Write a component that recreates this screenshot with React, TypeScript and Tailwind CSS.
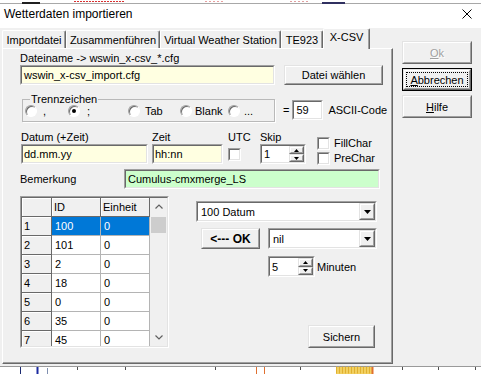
import React from "react";

const OUT_SUNK = "border border-t-[#a0a0a0] border-l-[#a0a0a0] border-r-white border-b-white";
const IN_SUNK = "border border-t-[#696969] border-l-[#696969] border-r-[#e3e3e3] border-b-[#e3e3e3]";
const OUT_RAISE = "border border-t-[#e3e3e3] border-l-[#e3e3e3] border-r-[#696969] border-b-[#696969]";
const IN_RAISE = "border border-t-white border-l-white border-r-[#a0a0a0] border-b-[#a0a0a0]";

type P = { className?: string; inner?: string; children?: React.ReactNode };

function Sunken({ className = "", inner = "bg-white", children }: P) {
  return (
    <div className={`${OUT_SUNK} ${className}`}>
      <div className={`${IN_SUNK} ${inner} w-full h-full flex items-center overflow-hidden`}>{children}</div>
    </div>
  );
}

function Raised({ className = "", inner = "", children }: P) {
  return (
    <div className={`${OUT_RAISE} bg-[#f0f0f0] ${className}`}>
      <div className={`${IN_RAISE} w-full h-full flex items-center justify-center ${inner}`}>{children}</div>
    </div>
  );
}

function TriDown({ w = 7, h = 4 }: { w?: number; h?: number }) {
  return (
    <svg width={w} height={h} viewBox={`0 0 ${w} ${h}`}>
      <polygon points={`0,0 ${w},0 ${w / 2},${h}`} fill="#000" />
    </svg>
  );
}
function TriUp({ w = 7, h = 4 }: { w?: number; h?: number }) {
  return (
    <svg width={w} height={h} viewBox={`0 0 ${w} ${h}`}>
      <polygon points={`0,${h} ${w},${h} ${w / 2},0`} fill="#000" />
    </svg>
  );
}

function Combo({ text, className = "" }: { text: string; className?: string }) {
  return (
    <Sunken className={`h-[21px] ${className}`}>
      <span className="flex-1 pl-[3px] leading-[14px]">{text}</span>
      <Raised className="w-[16px] h-full shrink-0">
        <TriDown />
      </Raised>
    </Sunken>
  );
}

function Spin({ text, className = "" }: { text: string; className?: string }) {
  return (
    <Sunken className={className}>
      <span className="flex-1 pl-[2px] leading-[14px]">{text}</span>
      <div className="w-[15px] h-full flex flex-col shrink-0">
        <Raised className="flex-1">
          <TriUp w={5} h={3} />
        </Raised>
        <Raised className="flex-1">
          <TriDown w={5} h={3} />
        </Raised>
      </div>
    </Sunken>
  );
}

function Check() {
  return <Sunken className="w-[13px] h-[13px] shrink-0" />;
}

function Radio({ checked = false }: { checked?: boolean }) {
  return (
    <span className="w-[12px] h-[12px] shrink-0 rounded-full border border-t-[#a0a0a0] border-l-[#a0a0a0] border-r-white border-b-white bg-white shadow-[inset_1px_1px_0_#696969] flex items-center justify-center">
      {checked && <span className="w-[4px] h-[4px] rounded-full bg-black" />}
    </span>
  );
}

function Chevron({ up }: { up?: boolean }) {
  return (
    <svg width="8" height="5" viewBox="0 0 8 5">
      <polyline
        points={up ? "0.5,4.5 4,1 7.5,4.5" : "0.5,0.5 4,4 7.5,0.5"}
        fill="none"
        stroke="#606060"
        strokeWidth="1.2"
      />
    </svg>
  );
}

const rows = [
  ["1", "100", "0"],
  ["2", "101", "0"],
  ["3", "2", "0"],
  ["4", "18", "0"],
  ["5", "0", "0"],
  ["6", "35", "0"],
  ["7", "45", "0"],
];

function Grid() {
  const fixed = "h-full bg-[#f0f0f0] border-r border-b border-[#696969] shadow-[inset_1px_1px_0_#fff] pl-[2px] leading-[18px] shrink-0";
  const cell = "h-full border-r border-b border-[#b4b4b4] pl-[3px] leading-[18px] shrink-0";
  return (
    <div className={`${OUT_SUNK} w-[149px] h-[152px] shrink-0`}>
      <div className={`${IN_SUNK} w-full h-full flex overflow-hidden bg-white`}>
        <div className="w-[128px] flex flex-col shrink-0">
          <div className="flex h-[19px] shrink-0">
            <div className={`${fixed} w-[30px]`} />
            <div className={`${fixed} w-[49px]`}>ID</div>
            <div className={`${fixed} w-[49px]`}>Einheit</div>
          </div>
          {rows.map((r, i) => (
            <div key={i} className="flex h-[19px] shrink-0">
              <div className={`${fixed} w-[30px]`}>{r[0]}</div>
              <div className={`${cell} w-[49px] ${i === 0 ? "bg-[#0078d7] text-white" : ""}`}>{r[1]}</div>
              <div className={`${cell} w-[49px] ${i === 0 ? "bg-[#0078d7] text-white" : ""}`}>{r[2]}</div>
            </div>
          ))}
        </div>
        <div className="w-[17px] h-full bg-[#f0f0f0] flex flex-col shrink-0">
          <div className="h-[17px] flex items-center justify-center shrink-0">
            <Chevron up />
          </div>
          <div className="mt-[2px] mx-[1px] h-[16px] bg-[#cdcdcd] shrink-0" />
          <div className="mt-auto h-[17px] flex items-center justify-center shrink-0">
            <Chevron />
          </div>
        </div>
      </div>
    </div>
  );
}

function Tab({ label, className = "", selected = false }: { label: string; className?: string; selected?: boolean }) {
  return (
    <div
      className={`${className} shrink-0 bg-[#f0f0f0] border-t border-l border-r border-t-white border-l-white border-r-[#696969] shadow-[inset_-1px_0_0_#a0a0a0] rounded-t-[2px] flex justify-center ${
        selected ? "h-[21px] -mb-px relative z-10 pt-[1px]" : "h-[18px] pt-[2px]"
      }`}
    >
      <span className="leading-[14px]">{label}</span>
    </div>
  );
}

export default function App() {
  return (
    <div className="w-[481px] h-[374px] overflow-hidden bg-[#f0f0f0] [font-family:'Liberation_Sans',Arial,sans-serif] text-[11px] leading-[14px] text-black flex flex-col">
      {/* background window strip */}
      <svg width="481" height="4" className="block shrink-0 bg-white">
        <line x1="0" y1="3.5" x2="481" y2="3.5" stroke="#a8a8a8" />
        <line x1="22" y1="3" x2="40" y2="3" stroke="#202020" strokeWidth="2" />
        <line x1="74" y1="1.5" x2="125" y2="1.5" stroke="#d83030" strokeDasharray="2 1" />
        <line x1="205" y1="1.5" x2="225" y2="1.5" stroke="#e8a0a0" strokeDasharray="2 2" />
        <line x1="290" y1="1.5" x2="310" y2="1.5" stroke="#e0a0a0" strokeDasharray="2 2" />
        <line x1="322" y1="3" x2="345" y2="3" stroke="#303060" strokeWidth="2" />
      </svg>

      {/* title bar */}
      <div className="h-[24px] bg-white flex items-center justify-between pl-[4px] pr-[9px] shrink-0">
        <span className="text-[12px] leading-[14px] mt-[-4px]">Wetterdaten importieren</span>
        <svg width="10" height="10" viewBox="0 0 10 10" className="mt-[-4px]">
          <line x1="0.5" y1="0.5" x2="9.5" y2="9.5" stroke="#000" strokeWidth="1" />
          <line x1="9.5" y1="0.5" x2="0.5" y2="9.5" stroke="#000" strokeWidth="1" />
        </svg>
      </div>

      {/* body */}
      <div className="h-[338px] flex shrink-0">
        <div className="ml-[2px] w-[391px] flex flex-col shrink-0">
          {/* tabs */}
          <div className="h-[20px] flex items-end shrink-0">
            <Tab label="Importdatei" className="w-[64px]" />
            <Tab label="Zusammenführen" className="w-[94px]" />
            <Tab label="Virtual Weather Station" className="w-[121px]" />
            <Tab label="TE923" className="w-[42px]" />
            <Tab label="X-CSV" className="w-[47px]" selected />
          </div>

          {/* panel */}
          <div className="h-[316px] border border-t-white border-l-white border-r-[#696969] border-b-[#696969] shadow-[inset_-1px_-1px_0_#a0a0a0] pl-[17px] flex flex-col shrink-0">
            {/* Row A */}
            <div className="mt-[2px] h-[14px] shrink-0">Dateiname -&gt; wswin_x-csv_*.cfg</div>
            <div className="h-[20px] flex shrink-0">
              <Sunken className="w-[255px] h-full" inner="bg-[#ffffe1]">
                <span className="pl-[2px]">wswin_x-csv_import.cfg</span>
              </Sunken>
              <Raised className="ml-[9px] w-[99px] h-full">Datei wählen</Raised>
            </div>

            {/* Row B */}
            <div className="mt-[8px] flex items-start shrink-0">
              <fieldset className="ml-[2px] w-[253px] border border-[#b9b9b9] shadow-[1px_1px_0_#fff] pb-[4px] pl-[2px]">
                <legend className="ml-[5px] px-[1px] leading-[12px]">Trennzeichen</legend>
                <div className="h-[12px] flex items-center">
                  <div className="w-[43px] flex items-center gap-[6px]">
                    <Radio />
                    <span>,</span>
                  </div>
                  <div className="w-[60px] flex items-center gap-[7px]">
                    <Radio checked />
                    <span>;</span>
                  </div>
                  <div className="w-[52px] flex items-center gap-[5px]">
                    <Radio />
                    <span>Tab</span>
                  </div>
                  <div className="w-[48px] flex items-center gap-[3px]">
                    <Radio />
                    <span>Blank</span>
                  </div>
                  <div className="flex items-center gap-[4px]">
                    <Radio />
                    <span>...</span>
                  </div>
                </div>
              </fieldset>
              <span className="ml-[8px] mt-[10px]">=</span>
              <Sunken className="ml-[3px] mt-[7px] w-[31px] h-[20px]">
                <span className="pl-[2px]">59</span>
              </Sunken>
              <span className="ml-[5px] mt-[10px]">ASCII-Code</span>
            </div>

            {/* Row C/D */}
            <div className="mt-[8px] flex items-start shrink-0">
              <div className="ml-[1px] w-[127px] flex flex-col shrink-0">
                <span className="h-[14px]">Datum (+Zeit)</span>
                <Sunken className="h-[20px]" inner="bg-[#ffffe1]">
                  <span className="pl-[1px]">dd.mm.yy</span>
                </Sunken>
              </div>
              <div className="ml-[4px] w-[71px] flex flex-col shrink-0">
                <span className="h-[14px]">Zeit</span>
                <Sunken className="h-[20px]" inner="bg-[#ffffe1]">
                  <span className="pl-[1px]">hh:nn</span>
                </Sunken>
              </div>
              <div className="ml-[5px] w-[32px] flex flex-col shrink-0">
                <span className="h-[14px]">UTC</span>
                <div className="mt-[4px]">
                  <Check />
                </div>
              </div>
              <div className="w-[46px] flex flex-col shrink-0">
                <span className="h-[14px]">Skip</span>
                <Spin text="1" className="h-[20px]" />
              </div>
              <div className="ml-[11px] flex flex-col shrink-0">
                <div className="mt-[6px] h-[14px] flex items-center gap-[4px]">
                  <Check />
                  <span>FillChar</span>
                </div>
                <div className="mt-[1px] h-[14px] flex items-center gap-[4px]">
                  <Check />
                  <span>PreChar</span>
                </div>
              </div>
            </div>

            {/* Row E */}
            <div className="mt-[4px] h-[20px] flex items-center shrink-0">
              <span className="w-[104px] shrink-0">Bemerkung</span>
              <Sunken className="w-[256px] h-full" inner="bg-[#ccffcc]">
                <span className="pl-[2px]">Cumulus-cmxmerge_LS</span>
              </Sunken>
            </div>

            {/* Row F */}
            <div className="mt-[7px] flex items-start shrink-0">
              <Grid />
              <div className="ml-[27px] flex flex-col">
                <Combo text="100 Datum" className="mt-[5px] w-[181px]" />
                <div className="mt-[6px] flex">
                  <Raised className="ml-[5px] w-[59px] h-[21px]">
                    <span className="font-bold text-[12px]">&lt;--- OK</span>
                  </Raised>
                  <Combo text="nil" className="ml-[8px] w-[109px]" />
                </div>
                <div className="mt-[7px] ml-[72px] flex items-center">
                  <Spin text="5" className="w-[47px] h-[21px]" />
                  <span className="ml-[2px]">Minuten</span>
                </div>
                <Raised className="mt-[48px] ml-[112px] w-[67px] h-[23px]">Sichern</Raised>
              </div>
            </div>
          </div>
        </div>

        {/* right buttons */}
        <div className="ml-[9px] mt-[13px] flex flex-col gap-[4px] shrink-0">
          <Raised className="w-[70px] h-[23px]">
            <span className="text-[#a0a0a0] [text-shadow:1px_1px_0_#fff]">
              <span className="underline">O</span>k
            </span>
          </Raised>
          <div className="w-[70px] h-[23px] border border-black">
            <Raised className="w-full h-full" inner="relative">
              <span className="absolute inset-[1px] border border-dotted border-black" />
              <span>
                <span className="underline">A</span>bbrechen
              </span>
            </Raised>
          </div>
          <Raised className="w-[70px] h-[23px]">
            <span>
              <span className="underline">H</span>ilfe
            </span>
          </Raised>
        </div>
      </div>

      {/* background chart strip */}
      <svg width="481" height="8" className="block shrink-0 bg-white">
        <line x1="0" y1="0.5" x2="481" y2="0.5" stroke="#9a9a9a" />
        <line x1="20.5" y1="1" x2="20.5" y2="8" stroke="#1b2a70" />
        <line x1="37.5" y1="1" x2="37.5" y2="8" stroke="#1b2aa0" strokeWidth="2" />
        <line x1="47.5" y1="2" x2="47.5" y2="8" stroke="#8090b0" />
        <line x1="77.5" y1="1" x2="77.5" y2="4" stroke="#505050" />
        <line x1="125.5" y1="1" x2="125.5" y2="4" stroke="#505050" />
        <line x1="215.5" y1="1" x2="215.5" y2="4" stroke="#505050" />
        <line x1="256.5" y1="1" x2="256.5" y2="8" stroke="#e07030" />
        <line x1="264.5" y1="1" x2="264.5" y2="8" stroke="#e07030" />
        <line x1="300.5" y1="1" x2="300.5" y2="4" stroke="#505050" />
        <rect x="336" y="1" width="36" height="7" fill="#f2d060" />
        <line x1="336" y1="4" x2="372" y2="4" stroke="#e0b030" strokeDasharray="1 2" strokeWidth="7" />
        <line x1="372.5" y1="1" x2="372.5" y2="8" stroke="#e07030" strokeWidth="2" />
        <line x1="402.5" y1="1" x2="402.5" y2="4" stroke="#505050" />
        <line x1="438.5" y1="1" x2="438.5" y2="4" stroke="#505050" />
        <line x1="475.5" y1="1" x2="475.5" y2="4" stroke="#505050" />
      </svg>
    </div>
  );
}
